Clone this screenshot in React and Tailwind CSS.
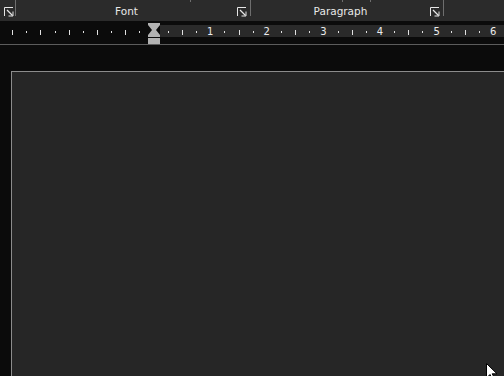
const FONT = { fontFamily: '"DejaVu Sans", "Liberation Sans", sans-serif' };

function Launcher() {
  return (
    <svg width="10" height="10" viewBox="0 0 10 10" className="shrink-0">
      <path d="M0.5 9V0.5H9" fill="none" stroke="#e6e6e6" strokeWidth="1" />
      <path d="M3 3L8.5 8.5" fill="none" stroke="#e6e6e6" strokeWidth="1.2" />
      <path d="M9 4.5V9H4.5" fill="none" stroke="#e6e6e6" strokeWidth="1" />
    </svg>
  );
}

function Group({ title, width }) {
  return (
    <div className="flex h-full items-start shrink-0" style={{ width }}>
      <div className="flex h-full flex-1 items-start pt-[4px]">
        <span className="flex-1 text-center text-[10.5px] leading-[14px] text-[#e8e8e8]">{title}</span>
        <div className="mt-[3px] mr-[3px]">
          <Launcher />
        </div>
      </div>
      <div className="h-[16px] w-px bg-[#6e6e6e]" />
    </div>
  );
}

function Ruler() {
  const zero = 153.6;
  const step = 14.15;
  const ticks = [];
  for (let i = -10; i <= 25; i++) {
    if (i === 0) continue;
    const x = zero + i * step;
    if (i > 0 && i % 4 === 0) {
      ticks.push(
        <text key={i} x={x} y={14} textAnchor="middle" fontSize="10" fill="#ececec" style={FONT}>
          {i / 4}
        </text>
      );
    } else if (i % 2 === 0) {
      ticks.push(<rect key={i} x={Math.round(x)} y={9} width={1} height={5} fill="#e0e0e0" />);
    } else {
      ticks.push(<rect key={i} x={Math.round(x)} y={10} width={1} height={2} fill="#e0e0e0" />);
    }
  }
  return (
    <svg width="504" height="23" className="block">
      <rect x="0" y="0" width="504" height="23" fill="#0b0b0b" />
      <rect x="160" y="4" width="344" height="12" fill="#2a2a2a" />
      {ticks}
      <polygon
        points="148,2 160,2 160,4 156,9 160,14 160,16 148,16 148,14 152,9 148,4"
        fill="#b2b2b2"
      />
      <rect x="148" y="17" width="12" height="6" fill="#b2b2b2" />
    </svg>
  );
}

export default function App() {
  return (
    <div className="relative h-[376px] w-[504px] overflow-hidden bg-[#0b0b0b]" style={FONT}>
      {/* ribbon group labels */}
      <div className="relative flex h-[21px] bg-[#2b2b2b]">
        <div className="flex h-full w-[16px] shrink-0 items-start">
          <div className="mt-[7px] ml-[4px] flex-1">
            <Launcher />
          </div>
          <div className="h-[16px] w-px bg-[#6e6e6e]" />
        </div>
        <Group title="Font" width={235} />
        <Group title="Paragraph" width={193} />
        <div className="absolute left-[190px] top-0 h-[2px] w-px bg-[#6e6e6e]" />
        <div className="absolute left-[342px] top-0 h-[2px] w-px bg-[#6e6e6e]" />
        <div className="absolute left-[370px] top-0 h-[2px] w-px bg-[#6e6e6e]" />
      </div>

      {/* ruler */}
      <div className="border-b border-[#5c5c5c]">
        <Ruler />
      </div>

      {/* document area */}
      <div className="pt-[26px] pl-[11px]">
        <div className="h-[320px] border-l border-t border-[#8c8c8c] bg-[#262626]" />
      </div>

      {/* mouse pointer */}
      <svg width="12" height="16" viewBox="0 0 12 16" className="absolute left-[486px] top-[363px]">
        <path d="M0.5 0.5V15L4 11.5L6.5 16L8.5 15L6.2 10.8H11Z" fill="#ffffff" stroke="#000000" strokeWidth="1" />
      </svg>
    </div>
  );
}
